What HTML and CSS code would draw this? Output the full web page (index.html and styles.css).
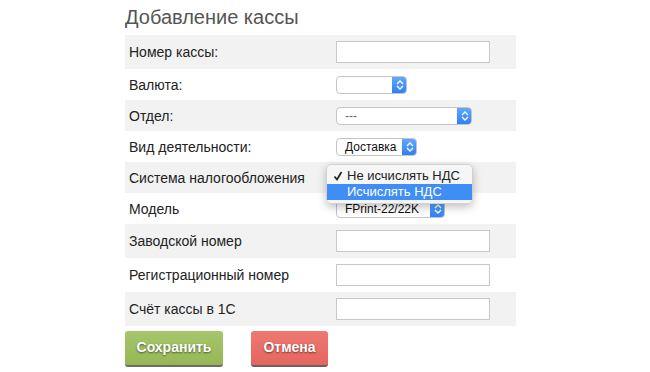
FILE: index.html
```html
<!DOCTYPE html>
<html>
<head>
  <title>Добавление кассы</title>
  <meta charset="utf-8">
  <link rel="stylesheet" href="styles.css">
</head>
<body>
  <div class="wrap">
    <h2 class="title">Добавление кассы</h2>
    <div class="form">
      <div class="row tall">
        <label>Номер кассы:</label>
        <input type="text" class="field">
      </div>
      <div class="row">
        <label>Валюта:</label>
        <div class="select sel-currency"><span class="val"></span><span class="arrow"><svg width="8" height="12" viewBox="0 0 8 12"><path d="M1 5 L4 2 L7 5 M1 7 L4 10 L7 7" fill="none" stroke="#fff" stroke-width="1.4"/></svg></span></div>
      </div>
      <div class="row">
        <label>Отдел:</label>
        <div class="select sel-dept"><span class="val dim">---</span><span class="arrow"><svg width="8" height="12" viewBox="0 0 8 12"><path d="M1 5 L4 2 L7 5 M1 7 L4 10 L7 7" fill="none" stroke="#fff" stroke-width="1.4"/></svg></span></div>
      </div>
      <div class="row">
        <label>Вид деятельности:</label>
        <div class="select sel-kind"><span class="val">Доставка</span><span class="arrow"><svg width="8" height="12" viewBox="0 0 8 12"><path d="M1 5 L4 2 L7 5 M1 7 L4 10 L7 7" fill="none" stroke="#fff" stroke-width="1.4"/></svg></span></div>
      </div>
      <div class="row tax">
        <label>Система налогообложения</label>
        <div class="select sel-tax"><span class="val"></span><span class="arrow"></span></div>
        <ul class="menu">
          <li><svg class="check" width="10" height="10" viewBox="0 0 10 10"><path d="M1.5 5.5 L4 8.5 L8.5 1" fill="none" stroke="#222" stroke-width="1.7"/></svg>Не исчислять НДС</li>
          <li class="active">Исчислять НДС</li>
        </ul>
      </div>
      <div class="row">
        <label>Модель</label>
        <div class="select sel-model"><span class="val">FPrint-22/22K</span><span class="arrow"><svg width="8" height="12" viewBox="0 0 8 12"><path d="M1 5 L4 2 L7 5 M1 7 L4 10 L7 7" fill="none" stroke="#fff" stroke-width="1.4"/></svg></span></div>
      </div>
      <div class="row tall">
        <label>Заводской номер</label>
        <input type="text" class="field">
      </div>
      <div class="row tall">
        <label>Регистрационный номер</label>
        <input type="text" class="field">
      </div>
      <div class="row tall">
        <label>Счёт кассы в 1С</label>
        <input type="text" class="field">
      </div>
    </div>
    <div class="buttons">
      <span class="btn btn-save">Сохранить</span>
      <span class="btn btn-cancel">Отмена</span>
    </div>
  </div>
</body>
</html>
```

FILE: styles.css
```css
body {
  margin: 0;
  background-color: #fff;
  font-family: "Liberation Sans", Arial, sans-serif;
  color: #222;
}
.wrap {
  width: 400px;
  margin: 0 auto;
}
.title {
  margin: 0;
  padding-top: 5px;
  height: 30px;
  font-size: 20px;
  font-weight: normal;
  color: #555;
  line-height: 24px;
}
.form {
  width: 391px;
}
.row {
  position: relative;
  display: flex;
  align-items: center;
  height: 31px;
  padding-left: 4px;
}
.row.tall {
  height: 34px;
}
.row:nth-child(odd) {
  background-color: #f2f2f2;
}
.row label {
  width: 207px;
  font-size: 14px;
}
.field {
  box-sizing: border-box;
  width: 154px;
  height: 22px;
  margin: 0;
  border: 1px solid #c8c8c8;
  background: #fff;
}
.select {
  box-sizing: border-box;
  display: flex;
  height: 18px;
  border: 1px solid #c4c4c4;
  border-radius: 4px;
  background: #fff;
  font-size: 12px;
  overflow: hidden;
}
.select .val {
  flex: 1;
  padding-left: 8px;
  line-height: 16px;
  color: #111;
}
.select .val.dim {
  color: #666;
}
.select .arrow {
  display: flex;
  align-items: center;
  justify-content: center;
  width: 15px;
  margin: -1px -1px -1px 0;
  background: linear-gradient(#62aafc, #2b7ff6);
  border-radius: 0 4px 4px 0;
}
.sel-currency { width: 71px; }
.sel-dept { width: 136px; }
.sel-kind { width: 81px; }
.sel-tax { width: 120px; }
.sel-model { width: 109px; }
.menu {
  position: absolute;
  left: 201px;
  top: 2px;
  z-index: 2;
  width: 145px;
  margin: 0;
  padding: 3px 0;
  list-style: none;
  background: rgba(246, 246, 246, 0.98);
  border: 1px solid #d2d2d2;
  border-radius: 5px;
  box-shadow: 0 3px 8px rgba(0, 0, 0, 0.25);
  font-size: 13px;
}
.menu li {
  position: relative;
  height: 16px;
  line-height: 16px;
  padding-left: 20px;
  color: #222;
}
.menu li.active {
  background-color: #3f8ef6;
  color: #fff;
}
.menu .check {
  position: absolute;
  left: 6px;
  top: 3px;
}
.buttons {
  display: flex;
  gap: 28px;
  margin-top: 5px;
}
.btn {
  box-sizing: border-box;
  height: 36px;
  line-height: 33px;
  text-align: center;
  color: #fff;
  font-size: 14px;
  font-weight: bold;
  text-shadow: 0 1px 2px rgba(0, 0, 0, 0.55);
  border-radius: 3px;
  border-bottom: 2px solid #6a6e62;
}
.btn-save {
  width: 98px;
  background: linear-gradient(#a6c66c, #96b656);
}
.btn-cancel {
  width: 77px;
  background: linear-gradient(#ee7a73, #e5655f);
  border-bottom-color: #6d605e;
}
```
